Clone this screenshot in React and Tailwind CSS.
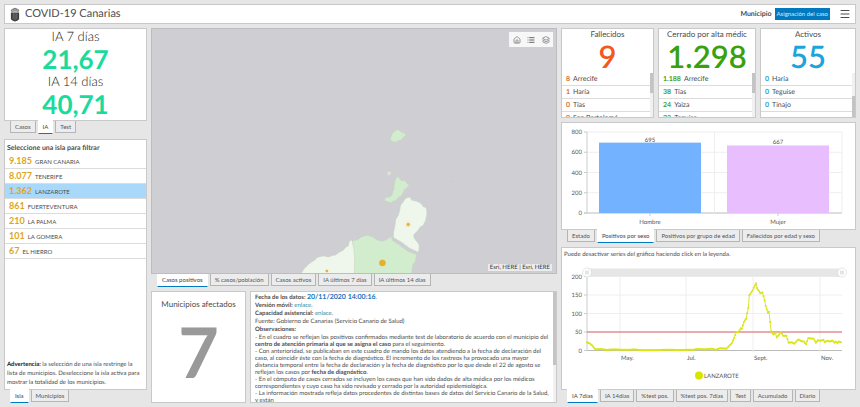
import React, {useState} from 'react';
import {House, List, Layers, Menu} from 'lucide-react';

const islands = [
    {name: "GRAN CANARIA", cases: "9.185"},
    {name: "TENERIFE", cases: "8.077"},
    {name: "LANZAROTE", cases: "1.362"},
    {name: "FUERTEVENTURA", cases: "861"},
    {name: "LA PALMA", cases: "210"},
    {name: "LA GOMERA", cases: "101"},
    {name: "EL HIERRO", cases: "67"}
];

const indicators = [
    {
        title: "Fallecidos",
        total: "9",
        color: "text-[#f15a1c]",
        listColor: "text-[#d9713c]",
        thumb: "h-[20px]",
        rows: [["8", "Arrecife"], ["1", "Haría"], ["0", "Tías"], ["0", "San Bartolomé"]]
    },
    {
        title: "Cerrado por alta médica",
        total: "1.298",
        color: "text-[#38a10d]",
        listColor: "text-[#4c9f2c]",
        thumb: "h-[20px]",
        rows: [["1.188", "Arrecife"], ["38", "Tías"], ["24", "Yaiza"], ["23", "Teguise"]]
    },
    {
        title: "Activos",
        total: "55",
        color: "text-[#1ba5dc]",
        listColor: "text-[#2f9fc9]",
        thumb: "h-[21px] mt-auto",
        rows: [["0", "Haría"], ["0", "Teguise"], ["0", "Tinajo"]]
    }
];

const sexBars = [
    {label: "Hombre", value: 695, x: 37, fill: "#73b2ff"},
    {label: "Mujer", value: 667, x: 165, fill: "#e8beff"}
];

// [day since 1 April, cumulative incidence]
const incidence = [
    [0, 22], [3, 18], [5, 13], [7, 5], [9, 3], [12, 4], [15, 3], [18, 2], [25, 3], [32, 2], [38, 2], [44, 3],
    [50, 1], [58, 1], [65, 1], [70, 2], [78, 2], [85, 1], [92, 2], [98, 2], [100, 4], [108, 3], [114, 5],
    [118, 2], [122, 6], [128, 5], [130, 11], [133, 20], [135, 34], [137, 50], [139, 50], [141, 60], [142, 58],
    [144, 77], [146, 86], [148, 115], [149, 149], [152, 163], [155, 182], [156, 169], [158, 160], [159, 155],
    [161, 157], [163, 136], [164, 120], [166, 102], [167, 105], [168, 77], [169, 52], [171, 43], [173, 48],
    [174, 35], [176, 42], [178, 50], [180, 40], [183, 40], [185, 21], [188, 22], [190, 18], [194, 30],
    [197, 25], [199, 24], [201, 17], [203, 33], [208, 32], [210, 21], [212, 28], [214, 26], [217, 29],
    [218, 23], [221, 26], [223, 24], [225, 27], [227, 21], [228, 24], [230, 20], [231, 24], [233, 22]
];

const months = [["May.", 58], ["Jul.", 124], ["Sept.", 191], ["Nov.", 258]];

function dailySeries(points) {
    const out = [];
    for (let i = 0; i < points.length - 1; i++) {
        const [d0, v0] = points[i];
        const [d1, v1] = points[i + 1];
        for (let d = d0; d < d1; d++) {
            out.push([d, v0 + ((v1 - v0) * (d - d0)) / (d1 - d0)]);
        }
    }
    out.push(points[points.length - 1]);
    return out;
}

function Panel({className = "", children}) {
    return (
        <section className={`min-h-0 min-w-0 overflow-hidden border border-[#c9c9c9] bg-white ${className}`}>
            {children}
        </section>
    );
}

function Tabs({items, initial = 0}) {
    const [active, setActive] = useState(initial);
    return (
        <div role="tablist" className="flex h-[13px] shrink-0 gap-[2px] pl-[6px]">
            {items.map((item, index) => (
                <button
                    key={item}
                    type="button"
                    role="tab"
                    aria-selected={index === active}
                    onClick={() => setActive(index)}
                    className={`whitespace-nowrap border px-[4px] text-[6px] leading-[10px] ${index === active
                        ? "-mt-px h-[14px] border-x-white border-t-white border-b-[#0079c1] bg-white text-[#444]"
                        : "h-[12px] border-t-0 border-[#b5b5b5] bg-[#ececec] text-[#555]"}`}>
                    {item}
                </button>
            ))}
        </div>
    );
}

function Emblem() {
    return (
        <svg viewBox="0 0 10 15" className="h-[15px] w-[10px] shrink-0" fill="#3c3c3c" aria-hidden="true">
            <path d="M.8 3.400C1.600 1.800 3.300 1.300 5 .8c1.700.5 3.400 1 4.200 2.600L8.200 5H1.800z" opacity=".7"/>
            <path d="M2.200 3h1M4.500 2.400h1M6.800 3h1M2.600 4.200h4.800" stroke="#fff" strokeWidth=".7"/>
            <path d="M.9 5.500h8.200v5.700c0 1.700-1.700 2.800-4.100 3.400-2.400-.6-4.100-1.700-4.100-3.400z"/>
            <path d="M3.200 6.300v6M5 6.300v7M6.800 6.300v6" stroke="#aaa" strokeWidth=".5"/>
        </svg>
    );
}

function Header() {
    return (
        <header className="flex h-[20px] shrink-0 items-center border border-[#c9c9c9] bg-white pl-[5px] pr-[4px]">
            <Emblem/>
            <h1 className="ml-[5px] text-[11px] leading-[16px]">COVID-19 Canarias</h1>
            <label htmlFor="assignment" className="ml-auto mr-[3px] text-[7px] font-bold">Municipio</label>
            <button id="assignment" type="button"
                    className="h-[12px] bg-[#0079c1] px-[2px] text-[6px] leading-[12px] text-[#d5eafa]">
                Asignación del caso
            </button>
            <button type="button" aria-label="Menú" className="ml-[9px]">
                <Menu className="size-[12px]" strokeWidth={2}/>
            </button>
        </header>
    );
}

function IslandList() {
    const [selected, setSelected] = useState("LANZAROTE");
    return (
        <Panel className="flex flex-1 flex-col">
            <h2 className="px-[2px] pt-[2px] text-[7px] font-bold leading-[12px]">Seleccione una isla para filtrar</h2>
            <ul>
                {islands.map(island => (
                    <li key={island.name}>
                        <button
                            type="button"
                            onClick={() => setSelected(island.name)}
                            className={`flex h-[15px] w-full items-center gap-[3px] border-b border-[#dcdcdc] px-[4px] text-left ${island.name === selected ? "bg-[#a9d9fa]" : ""}`}>
                            <span className="text-[9px] font-bold text-[#dca51e]">{island.cases}</span>
                            <span className="text-[6px]">{island.name}</span>
                        </button>
                    </li>
                ))}
            </ul>
            <p className="mt-auto pb-[2px] pl-[2px] pr-[6px] text-[6px] leading-[9px]">
                <strong className="text-[#222]">Advertencia:</strong> la selección de una isla restringe la lista de
                municipios. Deseleccione la isla activa para mostrar la totalidad de los municipios.
            </p>
        </Panel>
    );
}

function IslandMap() {
    return (
        <div className="relative min-h-0 flex-1 overflow-hidden border border-[#bdbdbf] bg-[#cfced3]">
            <svg viewBox="0 0 404 243" preserveAspectRatio="xMidYMax slice" className="size-full" role="img"
                 aria-label="Mapa de casos positivos">
                <g transform="translate(-2 81) scale(.3333)" stroke="#c3d6bd" strokeWidth="1.5">
                    <path fill="#d2ecce" d="M722 82l4-12 8-8 10-5 8 7 14 6 0 6-5 2-5 9-12 4-10 4-10-4-3-5z"/>
                    <path fill="#dfe6d8" d="M710 186l6-4 8 3-2 6-6 5-3-4z"/>
                    <path fill="#d2ecce" d="M734 212l4-10 4-4 6 4 6 9 10-1 5 7 8 7-8 9-7 4-4 11-6 9-8 3-6 9-10 3-5 4-8-2-9-3-3-6 6-5 10-1 7-7 3-12 4-6-2-7 3-9z"/>
                    <path fill="#eff6ec" d="M780 260l5 9 12 2 9 4 8 5 4 7 10 4 2 16-4 22-8 16-8 3-6 10-10 10-4 6 2 8 6 8 8 10 1 12-3 12-26-12-24-18-24-14 0-16 4-16 3-22 8-14 4-14 2-14 8-10 6-10 10-4z"/>
                    <path fill="#d2ecce" d="M607 390l16-3 10-8 18-6 16 5 16 10 16 3 16-8 8-7 4 13 20 13 24 18 28 11-4 22-7 8-4 28H611v-50z"/>
                    <path fill="#eff6ec" d="M453 489l10-16 14-14 18-12 8-8 18-4 16 3 10-4 8-1 12-8 14-8 6-8 8-4 3-14 6-4 3 6 5 24 2 26-1 46z"/>
                    <circle cx="774" cy="341" r="10" fill="#f7efcf" stroke="none"/>
                    <circle cx="774" cy="341" r="5" fill="#d9b74a" stroke="none"/>
                    <circle cx="697" cy="456" r="9" fill="#e9af28" stroke="#d9a93a"/>
                    <circle cx="531" cy="480" r="6" fill="#f7efcf" stroke="none"/>
                    <circle cx="531" cy="480" r="4" fill="#e0b23c" stroke="none"/>
                    <circle cx="907" cy="212" r="2" fill="#bcc8bc" stroke="none"/>
                </g>
            </svg>
            <div className="absolute right-[3px] top-[3px] flex bg-[#f7f7f7] text-[#666]">
                <button type="button" aria-label="Inicio" className="flex h-[15px] w-[15px] items-center justify-center">
                    <House className="size-[8px]"/>
                </button>
                <button type="button" aria-label="Leyenda"
                        className="flex h-[15px] w-[14px] items-center justify-center">
                    <List className="size-[8px]" strokeWidth={3}/>
                </button>
                <button type="button" aria-label="Capas" className="flex h-[15px] w-[15px] items-center justify-center">
                    <Layers className="size-[8px]"/>
                </button>
            </div>
            <span className="absolute bottom-[2px] right-[4px] bg-[#ececee] px-[2px] text-[6px] leading-[7px] text-[#333]">
                Esri, HERE | Esri, HERE
            </span>
        </div>
    );
}

function Notes() {
    return (
        <Panel className="flex">
            <div className="min-w-0 flex-1 pl-[4px] pr-[2px] pt-px text-[6px]">
                <div className="leading-[8px]">
                    <p><b>Fecha de los datos: <span className="text-[7px] text-[#1b75bc]">20/11/2020 14:00:16</span></b>.</p>
                    <p><b>Versión móvil:</b> <a href="#movil" className="text-[#1c8fa8]">enlace</a>.</p>
                    <p><b>Capacidad asistencial:</b> <a href="#capacidad" className="text-[#1c8fa8]">enlace</a>.</p>
                    <p>Fuente: Gobierno de Canarias (Servicio Canario de Salud)</p>
                    <p className="font-bold">Observaciones:</p>
                </div>
                <div className="leading-[7px]">
                    <p>- En el cuadro se reflejan los positivos confirmados mediante test de laboratorio de acuerdo con
                        el municipio del <b>centro de atención primaria al que se asigna el caso</b> para el
                        seguimiento.</p>
                    <p>- Con anterioridad, se publicaban en este cuadro de mando los datos atendiendo a la fecha de
                        declaración del caso, al coincidir éste con la fecha de diagnóstico. El incremento de los
                        rastreos ha provocado una mayor distancia temporal entre la fecha de declaración y la fecha de
                        diagnóstico por lo que desde el 22 de agosto se reflejan los casos por <b>fecha de
                            diagnóstico</b>.</p>
                    <p>- En el cómputo de casos cerrados se incluyen los casos que han sido dados de alta médica por los
                        médicos correspondientes y cuyo caso ha sido revisado y cerrado por la autoridad
                        epidemiológica.</p>
                    <p>- La información mostrada refleja datos procedentes de distintas bases de datos del Servicio
                        Canario de la Salud, y están</p>
                </div>
            </div>
            <div className="w-[3px] shrink-0 bg-[#f1f1f1]">
                <div className="h-[73px] bg-[#c4c4c4]"/>
            </div>
        </Panel>
    );
}

function Indicator({item}) {
    return (
        <Panel className="flex flex-col">
            <h2 className="mx-[8px] overflow-hidden whitespace-nowrap text-center text-[8px] leading-[10px]">{item.title}</h2>
            <p className={`h-[34px] text-center text-[31px] font-semibold leading-[34px] ${item.color}`}>{item.total}</p>
            <div className="flex min-h-0 flex-1">
                <ul className="min-w-0 flex-1 overflow-hidden">
                    {item.rows.map(([count, name]) => (
                        <li key={name}
                            className="flex h-[13px] items-center gap-[3px] border-b border-[#dcdcdc] px-[4px] text-[7px]">
                            <span className={`font-bold ${item.listColor}`}>{count}</span>
                            <span>{name}</span>
                        </li>
                    ))}
                </ul>
                <div className="flex w-[3px] shrink-0 flex-col bg-[#f1f1f1]">
                    <div className={`bg-[#c4c4c4] ${item.thumb}`}/>
                </div>
            </div>
        </Panel>
    );
}

function SexChart() {
    const y = value => 90 - (value * 81) / 800;
    return (
        <svg viewBox="0 0 293 106" className="size-full" fontSize="6" fill="#555" role="img"
             aria-label="Positivos por sexo">
            {[0, 200, 400, 600, 800].map(tick => (
                <g key={tick}>
                    <path d={`M22 ${y(tick)}H280`} stroke={tick === 0 ? "#bbb" : "#eee"} strokeWidth="1"/>
                    <path d={`M22 ${y(tick)}h3`} stroke="#ccc"/>
                    <text x="20" y={y(tick) + 2} textAnchor="end">{tick}</text>
                </g>
            ))}
            <path d="M152.500 9V90M280 9V90" stroke="#eee"/>
            <path d="M25 9V90" stroke="#ccc"/>
            {sexBars.map(bar => (
                <g key={bar.label} textAnchor="middle">
                    <rect x={bar.x} y={y(bar.value)} width="102" height={90 - y(bar.value)} fill={bar.fill}/>
                    <text x={bar.x + 51} y={y(bar.value) - 1}>{bar.value}</text>
                    <path d={`M${bar.x + 51} 90v3`} stroke="#ccc"/>
                    <text x={bar.x + 51} y="101">{bar.label}</text>
                </g>
            ))}
        </svg>
    );
}

function IncidenceChart() {
    const x = day => 25 + (day * 255) / 234;
    const y = value => 90 - (value * 74) / 200;
    const series = dailySeries(incidence);
    return (
        <svg viewBox="0 0 293 128" className="min-h-0 w-full flex-1" fontSize="6" fill="#555" role="img"
             aria-label="Incidencia acumulada a 7 días en Lanzarote">
            {[0, 50, 100, 150, 200].map(tick => (
                <g key={tick}>
                    <path d={`M25 ${y(tick)}H280`} stroke={tick === 0 ? "#bbb" : "#eee"}/>
                    <path d={`M22 ${y(tick)}h3`} stroke="#ccc"/>
                    <text x="20" y={y(tick) + 2} textAnchor="end">{tick}</text>
                </g>
            ))}
            {months.map(([label, pos]) => (
                <g key={label}>
                    <path d={`M${pos} 16V92`} stroke="#eee"/>
                    <text x={pos + 1} y="99">{label}</text>
                </g>
            ))}
            <path d="M25 16V90" stroke="#ccc"/>
            <rect x="25" y="8" width="255" height="8" fill="#e6e6e6"/>
            {[25, 280].map(cx => (
                <g key={cx}>
                    <circle cx={cx} cy="12" r="4.500" fill="#fff" stroke="#ccc" strokeWidth=".5"/>
                    <path d={`M${cx - 1} 10v4M${cx + 1} 10v4`} stroke="#aaa" strokeWidth=".6"/>
                </g>
            ))}
            <path d={`M25 ${y(50)}H280`} stroke="#dc5f5f" strokeWidth="1"/>
            <polyline points={series.map(([d, v]) => `${x(d)},${y(v)}`).join(" ")} fill="none" stroke="#d6e21a"
                      strokeWidth=".9"/>
            {series.map(([d, v]) => <circle key={d} cx={x(d)} cy={y(v)} r="1" fill="#d9e510"/>)}
            <circle cx="137" cy="115" r="4" fill="#d6e600"/>
            <text x="142" y="117">LANZAROTE</text>
        </svg>
    );
}

function App() {
    return (
        <div
            className="flex h-screen min-h-[400px] flex-col gap-[4px] bg-[#e6e6e6] p-[4px] font-[Lato,sans-serif] text-[#4c4c4c] [text-rendering:geometricPrecision]">
            <Header/>
            <main
                className="grid min-h-0 flex-1 grid-cols-[minmax(0,143fr)_minmax(0,406fr)_minmax(0,295fr)] gap-[4px]">
                <div className="flex min-h-0 flex-col">
                    <Panel className="flex shrink-0 flex-col items-center pb-px text-center">
                        <h2 className="text-[13px] font-light leading-[15px] text-[#222]">IA 7 días</h2>
                        <p className="text-[26px] font-bold leading-[30px] text-[#1adb9c]">21,67</p>
                        <h2 className="text-[13px] font-light leading-[15px] text-[#222]">IA 14 días</h2>
                        <p className="text-[26px] font-bold leading-[30px] text-[#1adb9c]">40,71</p>
                    </Panel>
                    <Tabs items={["Casos", "IA", "Test"]} initial={1}/>
                    <div className="mt-[5px] flex min-h-0 flex-1 flex-col">
                        <IslandList/>
                        <Tabs items={["Isla", "Municipios"]}/>
                    </div>
                </div>

                <div className="flex min-h-0 flex-col">
                    <IslandMap/>
                    <Tabs items={["Casos positivos", "% casos/población", "Casos activos", "IA últimos 7 días", "IA últimos 14 días"]}/>
                    <div className="mt-[4px] grid h-[112px] shrink-0 grid-cols-[minmax(0,95fr)_minmax(0,307fr)] gap-[4px]">
                        <Panel className="flex flex-col items-center pt-[5px]">
                            <h2 className="text-[8px] leading-[14px]">Municipios afectados</h2>
                            <p className="text-[70px] font-bold leading-[80px] text-[#999]">7</p>
                        </Panel>
                        <Notes/>
                    </div>
                </div>

                <div className="flex min-h-0 flex-col">
                    <div className="grid h-[90px] shrink-0 grid-cols-[minmax(0,93fr)_minmax(0,98fr)_minmax(0,96fr)] gap-[4px]">
                        {indicators.map(item => <Indicator key={item.title} item={item}/>)}
                    </div>
                    <div className="mt-[4px] flex min-h-0 flex-[121] flex-col">
                        <Panel className="flex-1"><SexChart/></Panel>
                        <Tabs items={["Estado", "Positivos por sexo", "Positivos por grupo de edad", "Fallecidos por edad y sexo"]}
                              initial={1}/>
                    </div>
                    <div className="mt-[4px] flex min-h-0 flex-[156] flex-col">
                        <Panel className="flex flex-1 flex-col">
                            <p className="px-[2px] pt-px text-[6px] leading-[11px]">
                                Puede desactivar series del gráfico haciendo click en la leyenda.
                            </p>
                            <IncidenceChart/>
                        </Panel>
                        <Tabs items={["IA 7días", "IA 14días", "%test pos.", "%test pos. 7días", "Test", "Acumulado", "Diario"]}/>
                    </div>
                </div>
            </main>
        </div>
    );
}

export default App;
